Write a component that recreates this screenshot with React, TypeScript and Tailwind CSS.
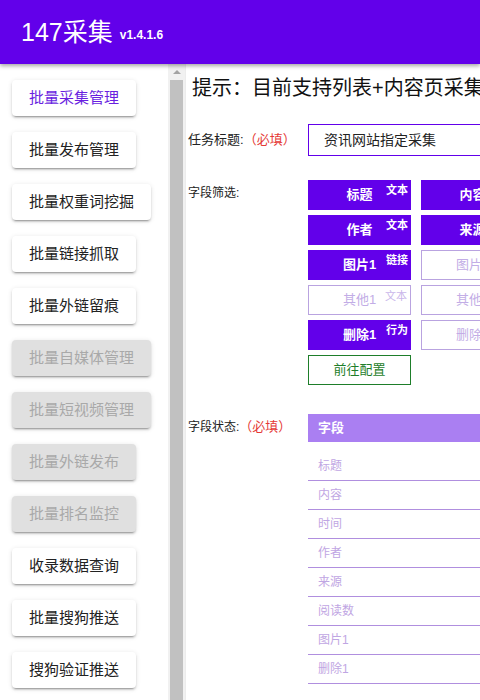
import React from "react";

const FONT = { fontFamily: '"Liberation Sans", "Noto Sans CJK SC", sans-serif' };

const navItems: { label: string; state: "active" | "normal" | "disabled" }[] = [
  { label: "批量采集管理", state: "active" },
  { label: "批量发布管理", state: "normal" },
  { label: "批量权重词挖掘", state: "normal" },
  { label: "批量链接抓取", state: "normal" },
  { label: "批量外链留痕", state: "normal" },
  { label: "批量自媒体管理", state: "disabled" },
  { label: "批量短视频管理", state: "disabled" },
  { label: "批量外链发布", state: "disabled" },
  { label: "批量排名监控", state: "disabled" },
  { label: "收录数据查询", state: "normal" },
  { label: "批量搜狗推送", state: "normal" },
  { label: "搜狗验证推送", state: "normal" },
];

type Field = { name: string; tag?: string; on: boolean };

const col1: Field[] = [
  { name: "标题", tag: "文本", on: true },
  { name: "作者", tag: "文本", on: true },
  { name: "图片1", tag: "链接", on: true },
  { name: "其他1", tag: "文本", on: false },
  { name: "删除1", tag: "行为", on: true },
];
const col2: Field[] = [
  { name: "内容", tag: "文本", on: true },
  { name: "来源", tag: "文本", on: true },
  { name: "图片2", tag: "链接", on: false },
  { name: "其他2", tag: "文本", on: false },
  { name: "删除2", tag: "行为", on: false },
];

const rows = ["标题", "内容", "时间", "作者", "来源", "阅读数", "图片1", "删除1"];

function FieldBtn({ f }: { f: Field }) {
  return (
    <div
      className={
        f.on
          ? "relative h-[30px] w-[103px] shrink-0 bg-[#6200ea] text-white font-bold flex items-center justify-center text-[13px]"
          : "relative h-[30px] w-[103px] shrink-0 bg-white border border-[#b9a3e0] text-[#c2ade6] flex items-center justify-center text-[13px]"
      }
    >
      <span>{f.name}</span>
      {f.tag && (
        <span
          className={
            f.on
              ? "absolute top-[3px] right-[3px] text-[11px] leading-[14px] font-bold text-white"
              : "absolute top-[3px] right-[3px] text-[11px] leading-[14px] text-[#c9b6ea]"
          }
        >
          {f.tag}
        </span>
      )}
    </div>
  );
}

export default function App() {
  return (
    <div className="w-[480px] h-[700px] overflow-hidden flex flex-col bg-white" style={FONT}>
      <header className="relative z-10 h-[64px] shrink-0 bg-[#6200ea] shadow-[0_2px_4px_rgba(0,0,0,0.35)] flex items-center pl-[21px]">
        <span className="text-white text-[25px] leading-none">147采集</span>
        <span className="text-white text-[12px] font-bold ml-[7px] mt-[6px]">v1.4.1.6</span>
      </header>
      <div className="flex flex-1 min-h-0">
        <aside className="w-[168px] shrink-0 flex flex-col items-start gap-4 pt-4 pl-3 overflow-hidden">
          {navItems.map((n) => (
            <div
              key={n.label}
              className={
                n.state === "disabled"
                  ? "h-9 shrink-0 px-[17px] rounded flex items-center text-[15px] whitespace-nowrap bg-[#e0e0e0] text-[#a9a9a9] shadow-[0_3px_1px_-2px_rgba(0,0,0,0.2),0_2px_2px_0_rgba(0,0,0,0.14),0_1px_5px_0_rgba(0,0,0,0.12)]"
                  : n.state === "active"
                  ? "h-9 shrink-0 px-[17px] rounded flex items-center text-[15px] whitespace-nowrap bg-white text-[#6a1fe0] shadow-[0_3px_1px_-2px_rgba(0,0,0,0.2),0_2px_2px_0_rgba(0,0,0,0.14),0_1px_5px_0_rgba(0,0,0,0.12)]"
                  : "h-9 shrink-0 px-[17px] rounded flex items-center text-[15px] whitespace-nowrap bg-white text-[#222] shadow-[0_3px_1px_-2px_rgba(0,0,0,0.2),0_2px_2px_0_rgba(0,0,0,0.14),0_1px_5px_0_rgba(0,0,0,0.12)]"
              }
            >
              {n.label}
            </div>
          ))}
        </aside>
        <div className="w-[17px] shrink-0 bg-[#f1f1f1] flex flex-col items-center">
          <div className="h-4 flex items-center justify-center">
            <div className="w-0 h-0 border-l-[4px] border-r-[4px] border-b-[4px] border-l-transparent border-r-transparent border-b-[#a3a3a3]" />
          </div>
          <div className="w-[13px] flex-1 bg-[#c1c1c1]" />
        </div>
        <main className="flex-1 min-w-0 border-l border-[#ececec] pl-[2px] overflow-hidden">
          <div className="pt-[10px] pl-[4px] text-[20px] leading-[28px] text-[#111] whitespace-nowrap">
            提示：目前支持列表+内容页采集，详情页采集
          </div>
          <div className="mt-[22px] flex items-center">
            <div className="w-[120px] shrink-0 text-[13px] text-[#222] whitespace-nowrap">
              任务标题:<span className="text-[#e53935]">（必填）</span>
            </div>
            <div className="h-[32px] w-[300px] shrink-0 border border-[#6200ea] flex items-center pl-[15px] text-[14px] text-[#222]">
              资讯网站指定采集
            </div>
          </div>
          <div className="mt-[24px] flex">
            <div className="w-[120px] shrink-0 pt-[5px] text-[12px] leading-[16px] text-[#222]">字段筛选:</div>
            <div className="flex gap-[10px]">
              <div className="flex flex-col gap-[5px]">
                {col1.map((f) => (
                  <FieldBtn key={f.name} f={f} />
                ))}
                <div className="h-[30px] w-[103px] border border-[#1e7e2a] text-[#1e7e2a] text-[13px] flex items-center justify-center">
                  前往配置
                </div>
              </div>
              <div className="flex flex-col gap-[5px]">
                {col2.map((f) => (
                  <FieldBtn key={f.name} f={f} />
                ))}
              </div>
            </div>
          </div>
          <div className="mt-[29px] flex">
            <div className="w-[120px] shrink-0 pt-[5px] text-[12px] leading-[16px] text-[#222] whitespace-nowrap">
              字段状态:<span className="text-[#e53935] text-[13px]">（必填）</span>
            </div>
            <div className="w-[400px] shrink-0">
              <div className="h-[28px] bg-[#aa7ff2] text-white text-[13px] font-bold flex items-center pl-[10px]">字段</div>
              <div className="h-[10px]" />
              {rows.map((r) => (
                <div key={r} className="h-[29px] border-b border-[#b08fdf] flex items-center pl-[10px] text-[12px] text-[#bfa6e3]">
                  {r}
                </div>
              ))}
            </div>
          </div>
        </main>
      </div>
    </div>
  );
}
